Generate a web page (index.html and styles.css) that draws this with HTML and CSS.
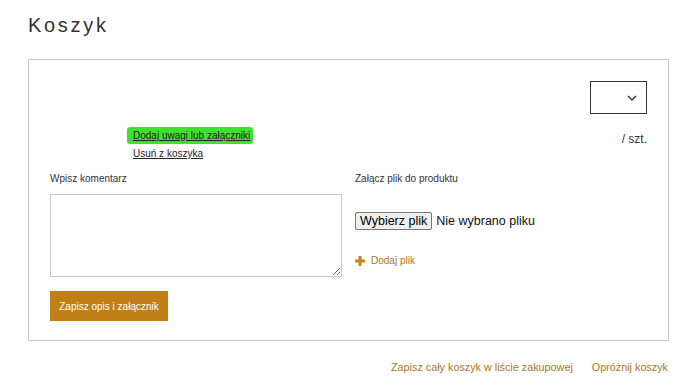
FILE: index.html
```html
<!DOCTYPE html>
<html>
<head>
<meta name="viewport" content="width=device-width, initial-scale=1">
<link rel="stylesheet" href="styles.css">
</head>
<body>
<div class="page">
  <h1 class="title">Koszyk</h1>

  <div class="card">
    <div class="qty-row">
      <div class="qty-select">
        <svg width="10" height="6" viewBox="0 0 10 6"><path d="M1 1l4 4 4-4" fill="none" stroke="#333" stroke-width="1.4"/></svg>
      </div>
    </div>

    <div class="item-row">
      <div class="item-links">
        <a href="#" class="hl">Dodaj uwagi lub załączniki</a>
        <a href="#" class="remove">Usuń z koszyka</a>
      </div>
      <span class="unit">/ szt.</span>
    </div>

    <div class="notes">
      <div class="col-left">
        <label class="lbl">Wpisz komentarz</label>
        <textarea class="comment"></textarea>
        <button class="save-btn">Zapisz opis i załącznik</button>
      </div>
      <div class="col-right">
        <label class="lbl">Załącz plik do produktu</label>
        <div class="file">
          <span class="file-btn">Wybierz plik</span>
          <span class="file-name">Nie wybrano pliku</span>
        </div>
        <a href="#" class="add-file">
          <svg width="10" height="10" viewBox="0 0 10 10"><path d="M3.5 0h3v3.5H10v3H6.5V10h-3V6.5H0v-3h3.5z" fill="#c4861a"/></svg>
          Dodaj plik
        </a>
      </div>
    </div>
  </div>

  <div class="footer-links">
    <a href="#">Zapisz cały koszyk w liście zakupowej</a>
    <a href="#">Opróżnij koszyk</a>
  </div>
</div>
</body>
</html>
```

FILE: styles.css
```css
* {box-sizing: border-box}

body, html {
  margin: 0;
  background: #fff;
  font-family: "Liberation Sans", Arial, sans-serif;
  color: #333;
}

.page {
  width: 641px;
  margin-left: 28px;
}

/* heading */
.title {
  margin: 0;
  padding-top: 14px;
  height: 59px;
  font-size: 20px;
  font-weight: normal;
  letter-spacing: 2.7px;
  color: #333;
}

/* cart item box */
.card {
  border: 1px solid #c8c8c8;
  padding: 21px 21px 19px 21px;
}

.qty-row {
  display: flex;
  justify-content: flex-end;
}

.qty-select {
  width: 57px;
  height: 33px;
  border: 1px solid #333;
  display: flex;
  align-items: center;
  justify-content: flex-end;
  padding-right: 9px;
}

.item-row {
  display: flex;
  justify-content: space-between;
  margin-top: 13px;
}

.item-links {
  margin-left: 77px;
  display: flex;
  flex-direction: column;
  align-items: flex-start;
}

.item-links a {
  font-size: 10px;
  color: #222;
  text-decoration: underline;
}

.hl {
  background: #3fe12f;
  padding: 3px 3px 3px 6px;
  line-height: 11px;
  border-radius: 3px;
}

.remove {
  margin-left: 6px;
  margin-top: 4px;
}

.unit {
  font-size: 12px;
  margin-top: 5px;
  color: #333;
}

/* comment and attachment */
.notes {
  display: flex;
  gap: 13px;
  margin-top: 14px;
}

.col-left {
  width: 292px;
  display: flex;
  flex-direction: column;
  align-items: flex-start;
}

.col-right {
  display: flex;
  flex-direction: column;
  align-items: flex-start;
}

.lbl {
  font-size: 10px;
  color: #333;
  line-height: 12px;
}

.comment {
  margin-top: 9px;
  width: 292px;
  height: 83px;
  border: 1px solid #c8c8c8;
  resize: vertical;
  display: block;
}

.save-btn {
  margin-top: 14px;
  width: 118px;
  height: 30px;
  border: none;
  background: #c17f15;
  color: #fff;
  font-family: "Liberation Sans", Arial, sans-serif;
  font-size: 10px;
  padding: 0;
}

.file {
  margin-top: 27px;
  display: flex;
  align-items: center;
  font-size: 12.5px;
}

.file-btn {
  background: #efefef;
  border: 1px solid #767676;
  border-radius: 2px;
  padding: 1px 4px;
  color: #000;
  line-height: 14px;
}

.file-name {
  margin-left: 4px;
  color: #111;
}

.add-file {
  margin-top: 25px;
  display: flex;
  align-items: center;
  gap: 6px;
  font-size: 10px;
  color: #a8771e;
  text-decoration: none;
}

/* bottom links */
.footer-links {
  display: flex;
  justify-content: flex-end;
  gap: 19px;
  margin-top: 20px;
  padding-right: 1px;
}

.footer-links a {
  font-size: 10.8px;
  color: #a8771e;
  text-decoration: none;
}
```
